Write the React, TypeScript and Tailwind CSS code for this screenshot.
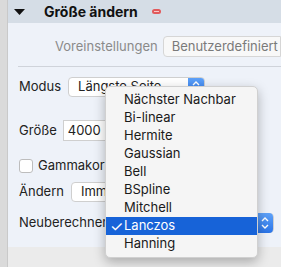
import React from "react";

const items = [
  "Nächster Nachbar",
  "Bi-linear",
  "Hermite",
  "Gaussian",
  "Bell",
  "BSpline",
  "Mitchell",
  "Lanczos",
  "Hanning",
];

function Arrows() {
  return (
    <svg width="16" height="20" viewBox="0 0 16 20" className="block">
      <path d="M5 8 L8 5 L11 8" fill="none" stroke="white" strokeWidth="1.4" />
      <path d="M5 12 L8 15 L11 12" fill="none" stroke="white" strokeWidth="1.4" />
    </svg>
  );
}

export default function App() {
  return (
    <div
      className="relative w-[281px] h-[267px] overflow-hidden flex bg-[#ebebeb] text-[13px] text-[#222]"
      style={{ fontFamily: "Inter, 'Liberation Sans', sans-serif" }}
    >
      {/* left strip */}
      <div className="w-[8px] shrink-0 bg-[#dadada] border-r border-[#c9c9c9]" />

      <div className="flex-1 flex flex-col">
        {/* header */}
        <div className="h-[23px] bg-[#d5dde6] flex items-center">
          <svg width="11" height="6" viewBox="0 0 11 6" className="ml-[6px]">
            <path d="M0 0 H11 L5.5 6 Z" fill="#111" />
          </svg>
          <span className="ml-[19px] text-[14px] font-bold text-[#111]">Größe ändern</span>
          <span className="ml-[14px] w-[9px] h-[5px] rounded-full bg-[#e2595b] flex items-center justify-center">
            <span className="w-[5px] h-px bg-[#f7c9c9]" />
          </span>
        </div>

        {/* body */}
        <div className="bg-[#eef2f9] flex flex-col pb-[14px]">
          <div className="mt-[13px] h-[21px] flex items-center">
            <span className="ml-[47px] text-[#8a8a8a]">Voreinstellungen</span>
            <div className="ml-[5px] h-[21px] flex-1 bg-[#f8f8f8] border border-[#d6d6d6] rounded-l-[4px] flex items-center pl-[8px] text-[#7a7a7a] whitespace-nowrap">
              Benutzerdefiniert
            </div>
          </div>

          <div className="mt-[9px] ml-[10px] h-px bg-[#cfd3da]" />

          <div className="mt-[10px] h-[20px] flex items-center gap-[7px] pl-[11px]">
            <span>Modus</span>
            <div className="w-[137px] h-[20px] bg-white border border-[#cfcfcf] rounded-[4px] flex items-center justify-between">
              <span className="pl-[9px]">Längste Seite</span>
              <span className="h-[18px] w-[16px] rounded-r-[3px] bg-gradient-to-b from-[#5ea2f9] to-[#2a74e8] flex items-center justify-center">
                <Arrows />
              </span>
            </div>
          </div>

          <div className="mt-[23px] h-[21px] flex items-center gap-[6px] pl-[11px]">
            <span>Größe</span>
            <div className="w-[174px] h-[21px] bg-white border border-[#cfcfcf] flex items-center pl-[4px]">
              4000
            </div>
          </div>

          <div className="mt-[18px] h-[14px] flex items-center gap-[5px] pl-[11px]">
            <span className="w-[14px] h-[14px] bg-white border border-[#bdbdbd] rounded-[3px]" />
            <span>Gammakorrektur</span>
          </div>

          <div className="mt-[9px] h-[20px] flex items-center gap-[7px] pl-[11px]">
            <span>Ändern</span>
            <div className="w-[141px] h-[20px] bg-white border border-[#cfcfcf] rounded-[4px] flex items-center pl-[9px]">
              Immer
            </div>
          </div>

          <div className="mt-[11px] h-[20px] flex items-center gap-[4px] pl-[11px]">
            <span>Neuberechnen</span>
            <div className="flex-1 mr-[7px] h-[20px] bg-white border border-[#cfcfcf] rounded-[4px] flex items-center justify-end">
              <span className="h-[20px] w-[16px] rounded-r-[4px] bg-gradient-to-b from-[#5ea2f9] to-[#2a74e8] flex items-center justify-center">
                <Arrows />
              </span>
            </div>
          </div>
        </div>
      </div>

      {/* popup menu */}
      <div className="absolute left-[105px] top-[86px] w-[153px] py-[4px] rounded-[5px] bg-[#f5f5f5] border border-[#d0d0d0] shadow-[0_4px_12px_rgba(0,0,0,0.28)]">
        {items.map((item) => {
          const selected = item === "Lanczos";
          return (
            <div
              key={item}
              className={
                selected
                  ? "h-[18px] flex items-center bg-[#1763d8] text-white"
                  : "h-[18px] flex items-center text-[#1a1a1a]"
              }
            >
              <span className="w-[18px] pl-[4px] text-[15px] leading-none">{selected ? "✓" : ""}</span>
              <span>{item}</span>
            </div>
          );
        })}
      </div>
    </div>
  );
}
